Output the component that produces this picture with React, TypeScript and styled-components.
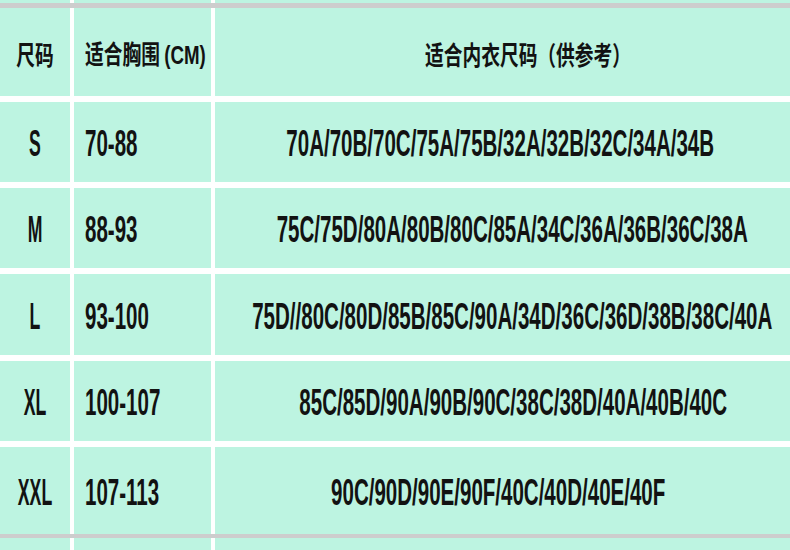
import React from "react";
import styled, { createGlobalStyle } from "styled-components";

const Global = createGlobalStyle`
  html, body { margin: 0; padding: 0; background: #ffffff; }
  body { width: 790px; height: 550px; overflow: hidden; }
`;

const MINT = "#bdf4e1";
const INK = "#121212";

const Table = styled.div`
  width: 790px;
  height: 550px;
  display: flex;
  flex-direction: column;
  background: #ffffff;
`;

const Row = styled.div<{ $h: number; $gapTop?: number }>`
  display: grid;
  grid-template-columns: 70px 137px 1fr;
  column-gap: 4px;
  height: ${(p) => p.$h}px;
  margin-top: ${(p) => p.$gapTop ?? 0}px;
  flex: none;
`;

const Rule = styled.div<{ $h: number }>`
  height: ${(p) => p.$h}px;
  background: #cdcdcd;
  flex: none;
`;

const Cell = styled.div<{ $align?: "left" | "center"; $shift?: number }>`
  background: ${MINT};
  display: flex;
  align-items: center;
  justify-content: ${(p) => (p.$align === "left" ? "flex-start" : "center")};
  padding-left: ${(p) =>
    p.$align === "left" ? 11 : Math.max(0, (p.$shift ?? 0) * 2)}px;
  padding-right: ${(p) =>
    p.$align === "left" ? 0 : Math.max(0, -(p.$shift ?? 0) * 2)}px;
  overflow: hidden;
  white-space: nowrap;
`;

const Latin = styled.span<{ $scale: number; $origin?: string }>`
  display: inline-block;
  font-family: "Liberation Sans", Arial, sans-serif;
  font-weight: 700;
  font-size: 36px;
  line-height: 1;
  color: ${INK};
  transform: scaleX(${(p) => p.$scale});
  transform-origin: ${(p) => p.$origin ?? "center"} center;
  margin-top: 4px;
`;

const Cjk = styled.span<{ $origin?: string }>`
  display: inline-block;
  font-family: "Noto Sans CJK SC", "Noto Sans", sans-serif;
  font-weight: 700;
  font-size: 26px;
  line-height: 1;
  color: ${INK};
  transform: scaleX(0.72);
  transform-origin: ${(p) => p.$origin ?? "center"} center;
  margin-top: 4px;
`;

const Unit = styled.span`
  font-family: "Liberation Sans", Arial, sans-serif;
  font-size: 26px;
  margin-left: 6px;
`;

const rows = [
  { size: "S", bust: "70-88", bra: "70A/70B/70C/75A/75B/32A/32B/32C/34A/34B", h: 80, shift: -2 },
  { size: "M", bust: "88-93", bra: "75C/75D/80A/80B/80C/85A/34C/36A/36B/36C/38A", h: 80, shift: 10 },
  { size: "L", bust: "93-100", bra: "75D//80C/80D/85B/85C/90A/34D/36C/36D/38B/38C/40A", h: 81, shift: 10 },
  { size: "XL", bust: "100-107", bra: "85C/85D/90A/90B/90C/38C/38D/40A/40B/40C", h: 80, shift: 11 },
  { size: "XXL", bust: "107-113", bra: "90C/90D/90E/90F/40C/40D/40E/40F", h: 87, shift: -4 },
];

export default function App() {
  return (
    <>
      <Global />
      <Table>
        <Row $h={3}>
          <Cell />
          <Cell />
          <Cell />
        </Row>
        <Rule $h={5} />
        <Row $h={88}>
          <Cell>
            <Cjk>尺码</Cjk>
          </Cell>
          <Cell $align="left">
            <Cjk $origin="left">
              适合胸围<Unit>(CM)</Unit>
            </Cjk>
          </Cell>
          <Cell $shift={26}>
            <Cjk>适合内衣尺码（供参考）</Cjk>
          </Cell>
        </Row>
        {rows.map((r) => (
          <Row key={r.size} $h={r.h} $gapTop={6}>
            <Cell>
              <Latin $scale={0.49}>{r.size}</Latin>
            </Cell>
            <Cell $align="left">
              <Latin $scale={0.57} $origin="left">
                {r.bust}
              </Latin>
            </Cell>
            <Cell $shift={r.shift}>
              <Latin $scale={0.57}>{r.bra}</Latin>
            </Cell>
          </Row>
        ))}
        <Rule $h={4} />
        <Row $h={12}>
          <Cell />
          <Cell />
          <Cell />
        </Row>
      </Table>
    </>
  );
}
